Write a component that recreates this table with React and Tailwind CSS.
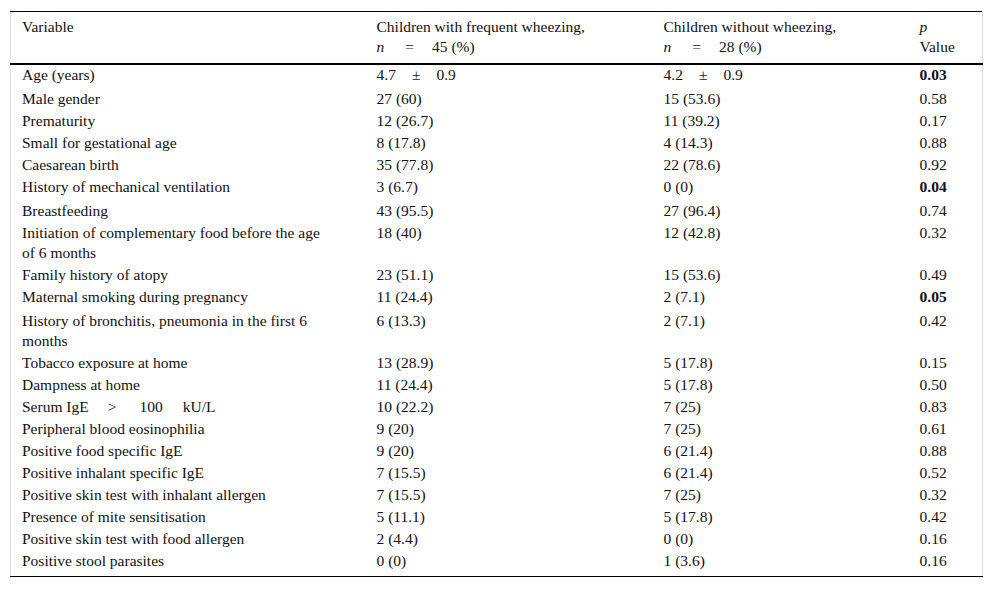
const rows = [
  { v: 'Age (years)', a: 'pm47', b: 'pm42', p: '0.03', bold: true },
  { v: 'Male gender', a: '27 (60)', b: '15 (53.6)', p: '0.58' },
  { v: 'Prematurity', a: '12 (26.7)', b: '11 (39.2)', p: '0.17' },
  { v: 'Small for gestational age', a: '8 (17.8)', b: '4 (14.3)', p: '0.88' },
  { v: 'Caesarean birth', a: '35 (77.8)', b: '22 (78.6)', p: '0.92' },
  { v: 'History of mechanical ventilation', a: '3 (6.7)', b: '0 (0)', p: '0.04', bold: true },
  { v: 'Breastfeeding', a: '43 (95.5)', b: '27 (96.4)', p: '0.74' },
  { v: 'Initiation of complementary food before the age of 6 months', a: '18 (40)', b: '12 (42.8)', p: '0.32' },
  { v: 'Family history of atopy', a: '23 (51.1)', b: '15 (53.6)', p: '0.49' },
  { v: 'Maternal smoking during pregnancy', a: '11 (24.4)', b: '2 (7.1)', p: '0.05', bold: true },
  { v: 'History of bronchitis, pneumonia in the first 6 months', a: '6 (13.3)', b: '2 (7.1)', p: '0.42' },
  { v: 'Tobacco exposure at home', a: '13 (28.9)', b: '5 (17.8)', p: '0.15' },
  { v: 'Dampness at home', a: '11 (24.4)', b: '5 (17.8)', p: '0.50' },
  { v: 'serum', a: '10 (22.2)', b: '7 (25)', p: '0.83' },
  { v: 'Peripheral blood eosinophilia', a: '9 (20)', b: '7 (25)', p: '0.61' },
  { v: 'Positive food specific IgE', a: '9 (20)', b: '6 (21.4)', p: '0.88' },
  { v: 'Positive inhalant specific IgE', a: '7 (15.5)', b: '6 (21.4)', p: '0.52' },
  { v: 'Positive skin test with inhalant allergen', a: '7 (15.5)', b: '7 (25)', p: '0.32' },
  { v: 'Presence of mite sensitisation', a: '5 (11.1)', b: '5 (17.8)', p: '0.42' },
  { v: 'Positive skin test with food allergen', a: '2 (4.4)', b: '0 (0)', p: '0.16' },
  { v: 'Positive stool parasites', a: '0 (0)', b: '1 (3.6)', p: '0.16' },
];

function Cell({ value }) {
  if (value === 'pm47' || value === 'pm42') {
    return (
      <span>
        {value === 'pm47' ? '4.7' : '4.2'}
        <span className="mx-[16px]">±</span>
        0.9
      </span>
    );
  }
  if (value === 'serum') {
    return (
      <span>
        Serum IgE<span className="ml-[19px]">&gt;</span>
        <span className="ml-[23px]">100</span>
        <span className="ml-[20px]">kU/L</span>
      </span>
    );
  }
  return value;
}

function pad(r, i, last) {
  if (i === last) return 'pb-[5px]';
  return r.bold ? 'pb-[4px]' : 'pb-[2px]';
}

export default function App() {
  const last = rows.length - 1;
  return (
    <div className="bg-white w-[992px] h-[589px] pt-[11px] pl-[10px] font-[family-name:Liberation_Serif,serif] text-[15.5px] leading-[20px] text-[#111]">
      <table className="table-fixed border-collapse w-[972px] border-x border-[#dcdcdc] border-t border-t-black border-b border-b-black">
        <colgroup>
          <col className="w-[355px]" />
          <col className="w-[287px]" />
          <col className="w-[256px]" />
          <col className="w-[74px]" />
        </colgroup>
        <thead>
          <tr className="border-b-2 border-black">
            <th className="text-left font-normal align-top pl-[11px] pt-[5px] pb-[6px]">Variable</th>
            <th className="text-left font-normal align-top pl-[11px] pt-[5px] pb-[6px]">
              Children with frequent wheezing,
              <br />
              <i>n</i>
              <span className="ml-[21px] mr-[18px]">=</span>45 (%)
            </th>
            <th className="text-left font-normal align-top pl-[11px] pt-[5px] pb-[6px]">
              Children without wheezing,
              <br />
              <i>n</i>
              <span className="ml-[21px] mr-[18px]">=</span>28 (%)
            </th>
            <th className="text-left font-normal align-top pl-[11px] pt-[5px] pb-[6px]">
              <i>p</i>
              <br />
              Value
            </th>
          </tr>
        </thead>
        <tbody>
          {rows.map((r, i) => (
            <tr key={i}>
              <td className={`align-top pl-[11px] pr-[35px] pt-0 ${pad(r, i, last)}`}>
                <Cell value={r.v} />
              </td>
              <td className="align-top pl-[11px] pt-0">
                <Cell value={r.a} />
              </td>
              <td className="align-top pl-[11px] pt-0">
                <Cell value={r.b} />
              </td>
              <td className={`align-top pl-[11px] pt-0 ${r.bold ? 'font-bold' : ''}`}>{r.p}</td>
            </tr>
          ))}
        </tbody>
      </table>
    </div>
  );
}
